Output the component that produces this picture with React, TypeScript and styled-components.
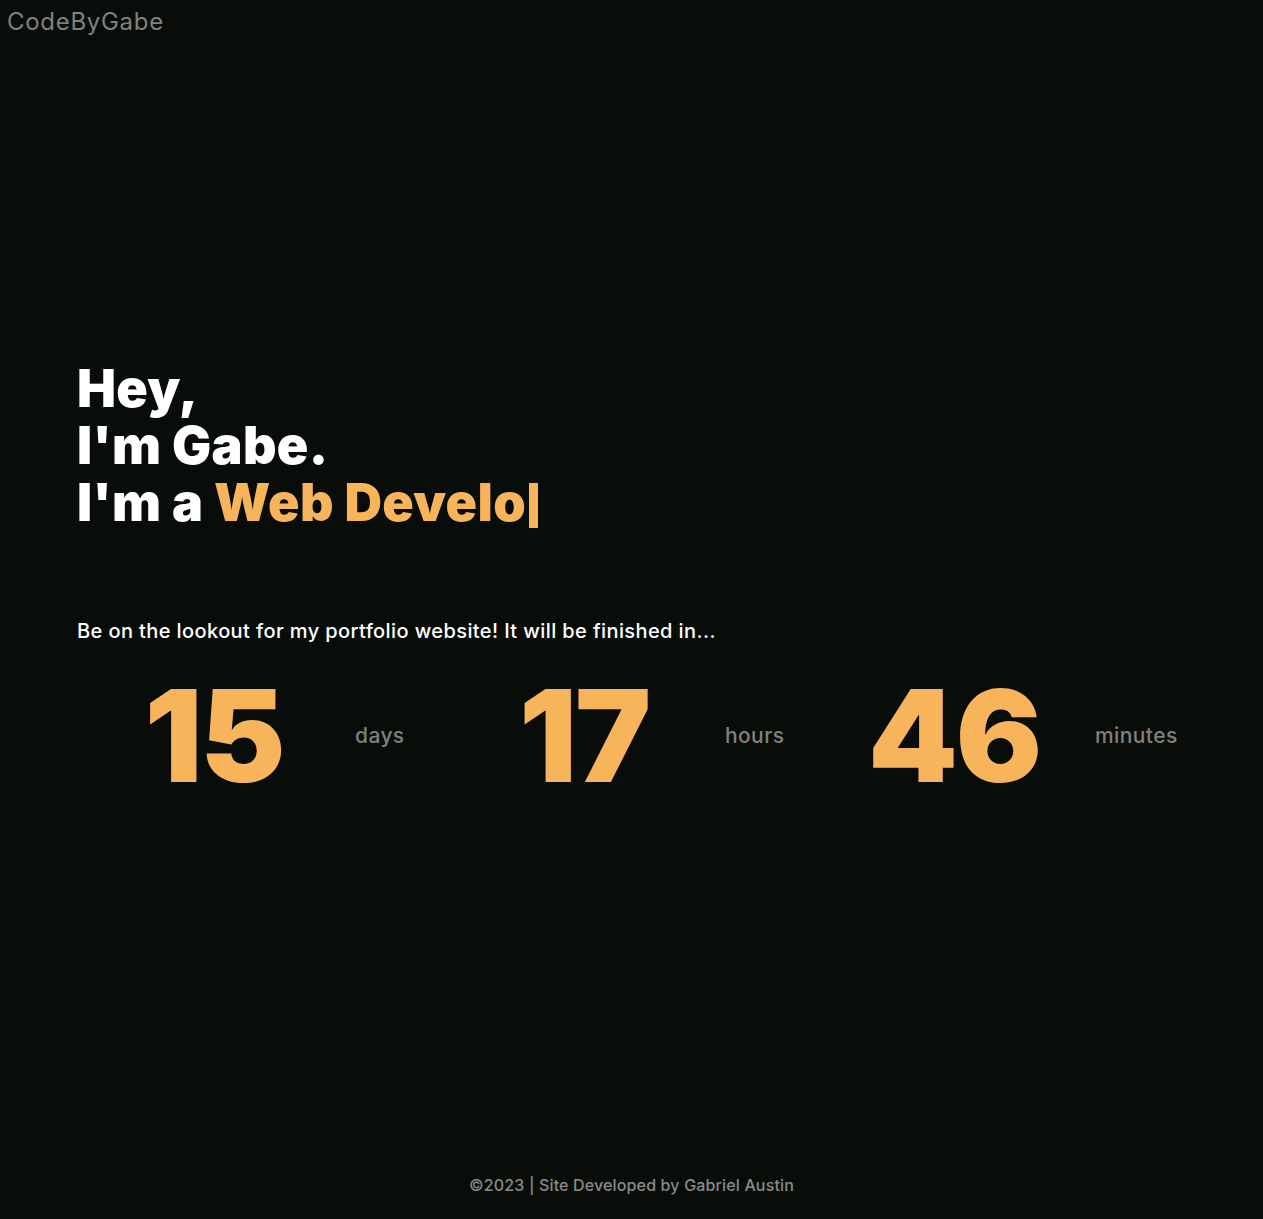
import React from 'react';
import styled, { createGlobalStyle } from 'styled-components';

const GlobalStyle = createGlobalStyle`
  html, body {
    margin: 0;
    padding: 0;
    background: #090d0a;
  }
  body {
    font-family: Inter, 'Noto Sans', sans-serif;
  }
`;

const Page = styled.div`
  min-height: 100vh;
  display: flex;
  flex-direction: column;
  background: #090d0a;
  color: #ffffff;
`;

const Header = styled.header`
  padding: 7px 7px 0;
`;

const Logo = styled.div`
  font-size: 24px;
  line-height: 29px;
  font-weight: 400;
  color: #7f817f;
  letter-spacing: 0.7px;
`;

const Main = styled.main`
  flex: 1;
  padding: 324px 77px 0;
`;

const Heading = styled.h1`
  margin: 0;
  font-size: 52px;
  font-weight: 900;
  letter-spacing: 0.3px;
`;

const Line = styled.span`
  display: block;
  line-height: 57px;
`;

const Accent = styled.span`
  color: #f7b45b;
`;

const Caret = styled.span`
  display: inline-block;
  width: 9px;
  height: 45px;
  margin-left: 3px;
  background: #f7b45b;
  vertical-align: -7px;
`;

const Lead = styled.p`
  margin: 88px 0 0;
  font-size: 20px;
  line-height: 24px;
  font-weight: 500;
  letter-spacing: 0.4px;
`;

const Countdown = styled.div`
  display: grid;
  grid-template-columns: repeat(3, 370px);
  margin-top: 27px;
`;

const Unit = styled.div`
  display: grid;
  grid-template-columns: 274px 1fr;
  column-gap: 4px;
  align-items: center;
`;

const Number = styled.div`
  text-align: center;
  font-size: 128px;
  line-height: 132px;
  font-weight: 900;
  color: #f7b45b;
  letter-spacing: -2px;
`;

const Label = styled.div`
  font-size: 21px;
  line-height: 24px;
  font-weight: 500;
  color: #7f817f;
  letter-spacing: 0.4px;
  margin-top: -1px;
`;

const Footer = styled.footer`
  text-align: center;
  padding: 0 0 24px;
  font-size: 16px;
  line-height: 20px;
  color: #8a8b8a;
  font-weight: 500;
  letter-spacing: 0.15px;
`;

const units = [
  { value: 15, label: 'days' },
  { value: 17, label: 'hours' },
  { value: 46, label: 'minutes' },
];

export default function App() {
  return (
    <Page>
      <GlobalStyle />
      <Header>
        <Logo>CodeByGabe</Logo>
      </Header>
      <Main>
        <Heading>
          <Line>Hey,</Line>
          <Line>I'm Gabe.</Line>
          <Line>
            I'm a <Accent>Web Develo</Accent>
            <Caret />
          </Line>
        </Heading>
        <Lead>Be on the lookout for my portfolio website! It will be finished in...</Lead>
        <Countdown>
          {units.map(u => (
            <Unit key={u.label}>
              <Number>{u.value}</Number>
              <Label>{u.label}</Label>
            </Unit>
          ))}
        </Countdown>
      </Main>
      <Footer>©2023 | Site Developed by Gabriel Austin</Footer>
    </Page>
  );
}
